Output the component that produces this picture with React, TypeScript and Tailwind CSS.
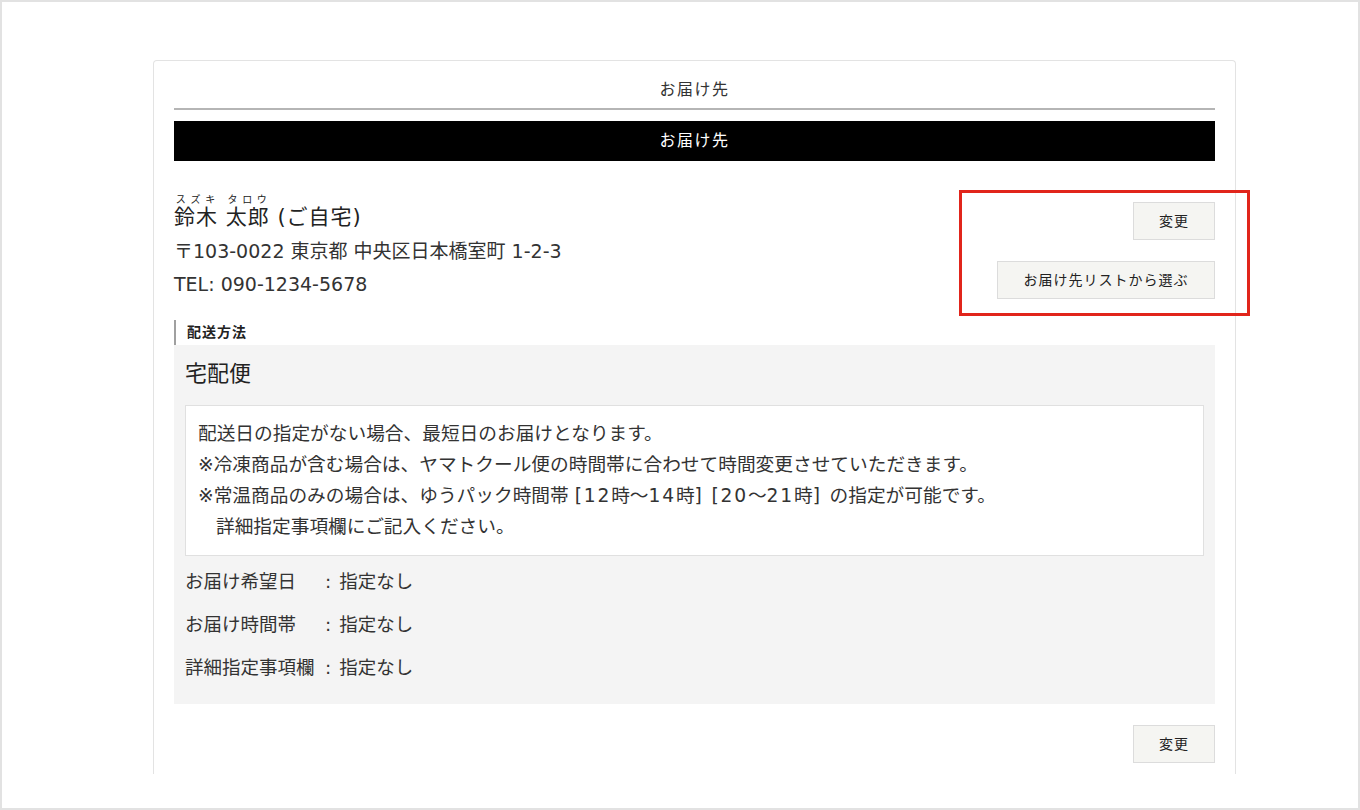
const font = { fontFamily: '"DejaVu Sans", "Noto Sans CJK JP", sans-serif' };

function Btn({ children, className = '' }: { children: React.ReactNode; className?: string }) {
  return (
    <button
      className={`h-[38px] border border-[#dcdcdc] bg-[#f5f5f2] text-[14px] tracking-[1px] text-[#222] ${className}`}
    >
      {children}
    </button>
  );
}

const rows = [
  ['お届け希望日', '指定なし'],
  ['お届け時間帯', '指定なし'],
  ['詳細指定事項欄', '指定なし'],
];

// latin parts in the reference font run wider
function Lat({ children }: { children: React.ReactNode }) {
  return <span className="tracking-[1.8px]">{children}</span>;
}

export default function App() {
  return (
    <div
      className="relative h-[810px] w-[1360px] overflow-hidden border-2 border-[#e2e2e2] bg-white text-[#333]"
      style={font}
    >
      <div className="ml-[151px] mt-[58px] h-[714px] w-[1083px] rounded-t-[4px] border border-b-0 border-[#e3e3e3] px-5">
        {/* page title */}
        <div className="border-b-2 border-[#b5b5b5] pb-[7px] pt-[18px] text-center text-[16px] leading-[22px] tracking-[1.5px]">
          お届け先
        </div>
        <div className="mt-[11px] flex h-10 items-center justify-center bg-black text-[16px] tracking-[1.5px] text-white">
          お届け先
        </div>

        {/* address */}
        <div className="mt-[33px] flex justify-between">
          <div>
            <div className="text-[21px] leading-[30px] tracking-[1px] text-[#222]">
              <ruby>
                鈴木<rt className="text-[10px] leading-[12px] tracking-[1px]">スズキ</rt>
              </ruby>{' '}
              <ruby>
                太郎<rt className="text-[10px] leading-[12px] tracking-[1px]">タロウ</rt>
              </ruby>{' '}
              (ご自宅)
            </div>
            <div className="mt-[3px] text-[19px] leading-[33px]">〒103-0022 東京都 中央区日本橋室町 1-2-3</div>
            <div className="text-[19px] leading-[33px]">TEL: 090-1234-5678</div>
          </div>
          <div className="flex flex-col items-end gap-[21px] pt-[8px]">
            <Btn className="w-[82px]">変更</Btn>
            <Btn className="w-[218px]">お届け先リストから選ぶ</Btn>
          </div>
        </div>

        {/* shipping method */}
        <div className="mt-[19px] flex h-[25px] items-center border-l-2 border-[#a0a0a0] pl-[11px] text-[14px] font-bold tracking-[1px] text-[#222]">
          配送方法
        </div>
        <div className="bg-[#f4f4f4] px-[11px] pb-[23px] pt-[15px]">
          <div className="text-[22px] leading-[28px] text-[#222]">宅配便</div>
          <div className="mt-[17px] border border-[#e0e0e0] bg-white px-[12px] pb-[13px] pt-[12px] text-[18.7px] leading-[31px]">
            <div>配送日の指定がない場合、最短日のお届けとなります。</div>
            <div>※冷凍商品が含む場合は、ヤマトクール便の時間帯に合わせて時間変更させていただきます。</div>
            <div>
              ※常温商品のみの場合は、ゆうパック時間帯 <Lat>[12</Lat>時〜<Lat>14</Lat>時<Lat>] [20</Lat>〜
              <Lat>21</Lat>時<Lat>] </Lat>の指定が可能です。
            </div>
            <div className="pl-[18px]">詳細指定事項欄にご記入ください。</div>
          </div>
          <div className="mt-[13px] flex flex-col gap-[17px] text-[18.5px] leading-[26px]">
            {rows.map(([k, v]) => (
              <div key={k} className="flex">
                <span className="w-[140px]">{k}</span>
                <span>:</span>
                <span className="ml-[8px]">{v}</span>
              </div>
            ))}
          </div>
        </div>

        <div className="mt-[21px] flex justify-end">
          <Btn className="w-[82px]">変更</Btn>
        </div>
      </div>

      {/* annotation highlight */}
      <div className="absolute left-[957px] top-[188px] h-[126px] w-[291px] border-[3px] border-[#e1251b]" />
    </div>
  );
}
